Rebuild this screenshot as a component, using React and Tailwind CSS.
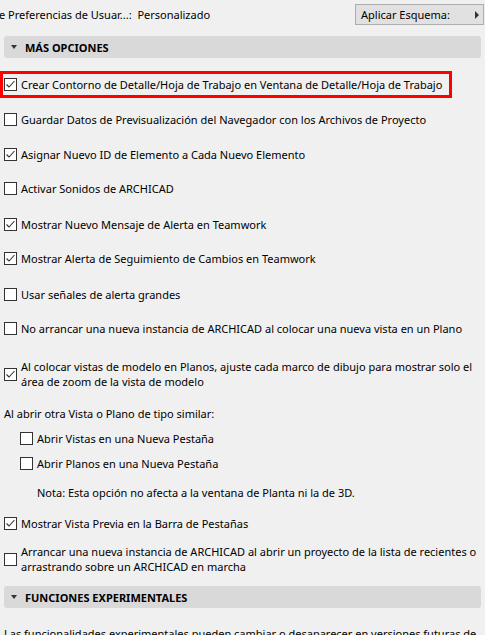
import React from "react";

function Box({ checked }) {
  return (
    <span className="flex h-[13px] w-[13px] shrink-0 items-center justify-center border border-[#333333] bg-white">
      {checked ? (
        <svg width="11" height="11" viewBox="0 0 11 11">
          <polyline points="1.5,5.5 4,8 9.5,2" fill="none" stroke="#333333" strokeWidth="1.1" />
        </svg>
      ) : null}
    </span>
  );
}

function Row({ checked, children, className = "" }) {
  return (
    <div className={`flex items-center gap-[4px] ${className}`}>
      <Box checked={checked} />
      <span>{children}</span>
    </div>
  );
}

function Section({ title, className = "" }) {
  return (
    <div className={`mx-[4px] flex h-[22px] items-center rounded-[3px] bg-[#d9d9d9] ${className}`}>
      <span className="ml-[7px] mr-[8px] h-0 w-0 border-x-[3.5px] border-t-[4px] border-x-transparent border-t-[#333333]" />
      <span className="font-bold">{title}</span>
    </div>
  );
}

export default function App() {
  return (
    <div className="h-[635px] w-[485px] overflow-hidden bg-[#f0f0f0] font-['Noto_Sans',sans-serif] text-[11px] leading-[15px] text-black">
      {/* top bar */}
      <div className="mt-[4px] flex h-[21px] items-center pr-[1px]">
        <span className="-ml-[1px] whitespace-pre">e Preferencias de Usuar...:  Personalizado</span>
        <button className="ml-auto flex h-[21px] w-[129px] items-center border border-[#adadad] bg-[#e1e1e1] pl-[5px] pr-[4px]">
          <span>Aplicar Esquema:</span>
          <span className="ml-auto h-0 w-0 border-y-[4px] border-l-[4px] border-y-transparent border-l-[#333333]" />
        </button>
      </div>

      <Section title="MÁS OPCIONES" className="mt-[11px]" />

      <div className="mt-[13px] flex h-[27px] w-[452px] items-center border-[3px] border-[#ff0000] pl-[1px]">
        <Row checked>Crear Contorno de Detalle/Hoja de Trabajo en Ventana de Detalle/Hoja de Trabajo</Row>
      </div>

      <div className="pl-[4px]">
        <Row className="mt-[14px]">Guardar Datos de Previsualización del Navegador con los Archivos de Proyecto</Row>
        <Row checked className="mt-[20px]">Asignar Nuevo ID de Elemento a Cada Nuevo Elemento</Row>
        <Row className="mt-[19px]">Activar Sonidos de ARCHICAD</Row>
        <Row checked className="mt-[21px]">Mostrar Nuevo Mensaje de Alerta en Teamwork</Row>
        <Row checked className="mt-[19px]">Mostrar Alerta de Seguimiento de Cambios en Teamwork</Row>
        <Row className="mt-[21px]">Usar señales de alerta grandes</Row>
        <Row className="mt-[19px]">No arrancar una nueva instancia de ARCHICAD al colocar una nueva vista en un Plano</Row>
        <Row checked className="mt-[23px] pr-[8px]">
          Al colocar vistas de modelo en Planos, ajuste cada marco de dibujo para mostrar solo el área de zoom de la vista de modelo
        </Row>
        <div className="mt-[17px]">Al abrir otra Vista o Plano de tipo similar:</div>
        <div className="pl-[16px]">
          <Row className="mt-[10px]">Abrir Vistas en una Nueva Pestaña</Row>
          <Row className="mt-[10px]">Abrir Planos en una Nueva Pestaña</Row>
          <div className="mt-[14px] pl-[17px]">Nota: Esta opción no afecta a la ventana de Planta ni la de 3D.</div>
        </div>
        <Row checked className="mt-[16px]">Mostrar Vista Previa en la Barra de Pestañas</Row>
        <Row className="mt-[13px] pr-[8px]">
          Arrancar una nueva instancia de ARCHICAD al abrir un proyecto de la lista de recientes o arrastrando sobre un ARCHICAD en marcha
        </Row>
      </div>

      <Section title="FUNCIONES EXPERIMENTALES" className="mt-[12px]" />

      <div className="mt-[18px] whitespace-nowrap pl-[4px]">
        Las funcionalidades experimentales pueden cambiar o desaparecer en versiones futuras de
      </div>
    </div>
  );
}
